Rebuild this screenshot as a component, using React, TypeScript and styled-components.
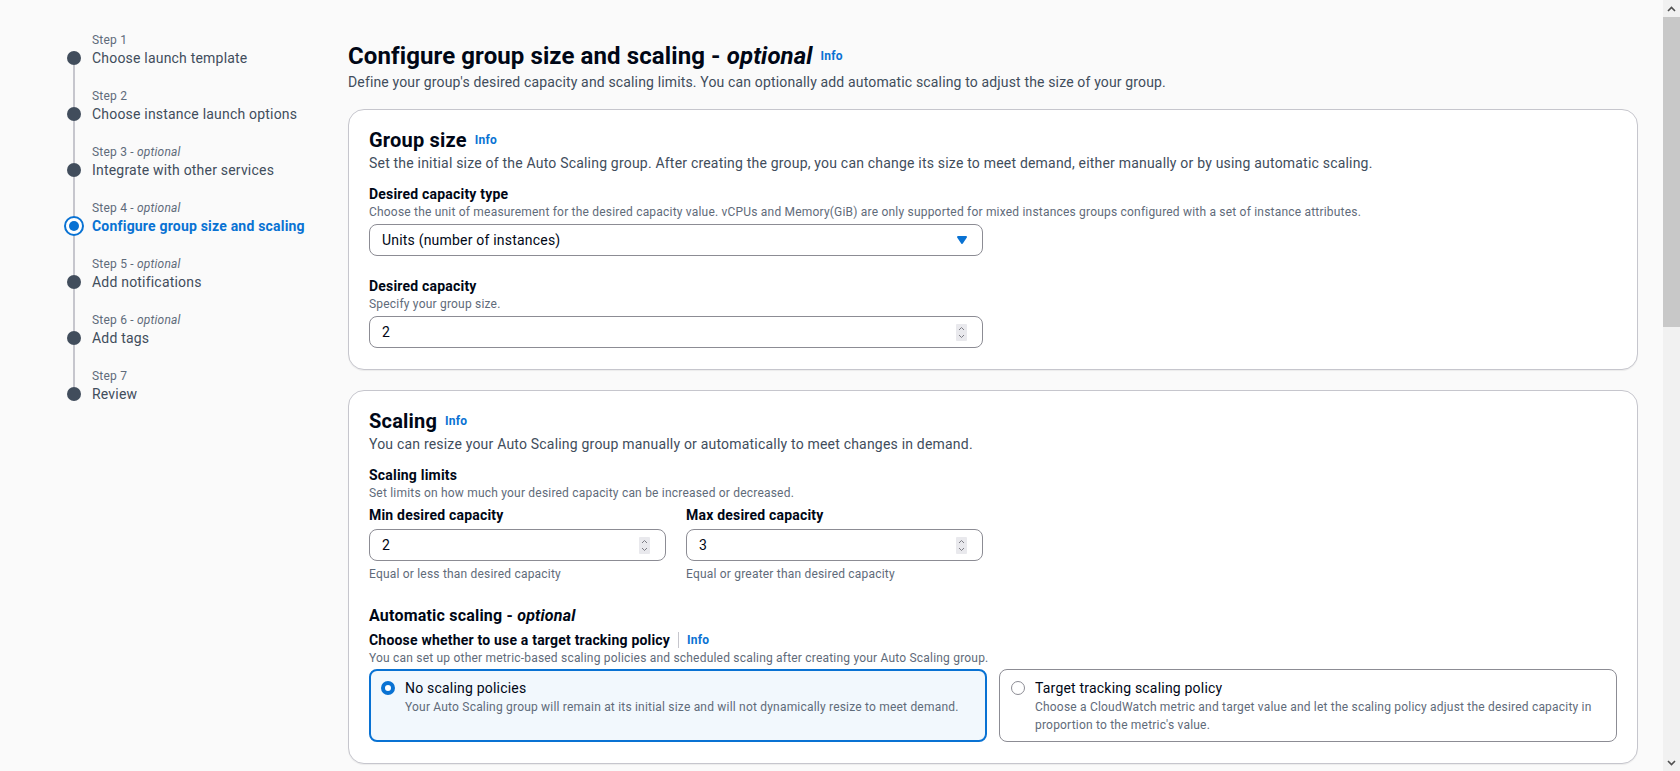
import styled, { createGlobalStyle } from 'styled-components';

const GlobalStyle = createGlobalStyle`
  * { box-sizing: border-box; }
  html, body {
    margin: 0;
    padding: 0;
    background: #fafafa;
  }
  body {
    font-family: Roboto, "Liberation Sans", Arial, sans-serif;
    font-size: 14px;
    line-height: 20px;
    letter-spacing: 0.2px;
    color: #000716;
  }
`;

const Page = styled.div`
  display: flex;
  align-items: flex-start;
  padding-bottom: 60px;
`;

const Nav = styled.nav`
  flex: none;
  width: 348px;
  padding: 32px 0 0 56px;
`;

const StepItem = styled.div`
  display: grid;
  grid-template-columns: 36px auto;
  grid-template-rows: 16px 20px 20px;
`;

const Rail = styled.div`
  grid-row: 1 / span 3;
  display: flex;
  flex-direction: column;
  align-items: center;
`;

const Segment = styled.div<{ $hidden?: boolean; $size?: number; $grow?: boolean }>`
  width: 2px;
  flex: ${(p) => (p.$grow ? '1' : 'none')};
  height: ${(p) => (p.$size ? `${p.$size}px` : 'auto')};
  background: ${(p) => (p.$hidden ? 'transparent' : '#c6c6cd')};
`;

const Dot = styled.div<{ $active?: boolean }>`
  flex: none;
  width: ${(p) => (p.$active ? '20px' : '14px')};
  height: ${(p) => (p.$active ? '20px' : '14px')};
  border-radius: 50%;
  background: ${(p) => (p.$active ? '#ffffff' : '#414d5c')};
  border: ${(p) => (p.$active ? '2px solid #0972d3' : 'none')};
  display: flex;
  align-items: center;
  justify-content: center;
`;

const DotCore = styled.div`
  width: 10px;
  height: 10px;
  border-radius: 50%;
  background: #0972d3;
`;

const StepNumber = styled.div`
  font-size: 12px;
  line-height: 16px;
  color: #5f6b7a;
  white-space: nowrap;
`;

const StepLabel = styled.div<{ $active?: boolean }>`
  font-size: 14px;
  line-height: 20px;
  white-space: nowrap;
  color: ${(p) => (p.$active ? '#0972d3' : '#414d5c')};
  font-weight: ${(p) => (p.$active ? 700 : 400)};
`;

const Main = styled.main`
  flex: none;
  width: 1290px;
  padding-top: 41px;
`;

const TitleRow = styled.div`
  display: flex;
  align-items: center;
  gap: 8px;
`;

const H1 = styled.h1`
  margin: 0;
  font-size: 24px;
  line-height: 30px;
  font-weight: 700;
  letter-spacing: 0.1px;
  color: #000716;
`;

const InfoLink = styled.a`
  font-size: 12px;
  line-height: 16px;
  font-weight: 700;
  color: #0972d3;
  text-decoration: none;
`;

const PageDesc = styled.p`
  margin: 1px 0 17px;
  font-size: 14px;
  line-height: 20px;
  letter-spacing: 0.15px;
  color: #414d5c;
`;

const Container = styled.section`
  background: #ffffff;
  border: 1px solid #c6c6cd;
  border-radius: 16px;
  padding: 18px 20px 21px;
  box-shadow: 0 1px 1px rgba(0, 7, 22, 0.06);
  & + & {
    margin-top: 20px;
  }
`;

const H2 = styled.h2`
  margin: 0;
  font-size: 20px;
  line-height: 24px;
  font-weight: 700;
`;

const CardDesc = styled.p`
  margin: 1px 0 11px;
  font-size: 14px;
  line-height: 20px;
  color: #414d5c;
`;

const Field = styled.div<{ $gap?: number }>`
  display: flex;
  flex-direction: column;
  width: 614px;
  margin-top: ${(p) => p.$gap ?? 0}px;
`;

const Label = styled.div`
  display: flex;
  align-items: center;
  font-size: 14px;
  line-height: 20px;
  font-weight: 700;
  white-space: nowrap;
`;

const Desc = styled.div`
  font-size: 12px;
  line-height: 16px;
  color: #5f6b7a;
  white-space: nowrap;
`;

const Control = styled.div<{ $gap?: number }>`
  margin-top: ${(p) => p.$gap ?? 4}px;
`;

const SelectBox = styled.div`
  display: flex;
  align-items: center;
  justify-content: space-between;
  height: 32px;
  padding: 0 12px 0 12px;
  border: 1px solid #8c8c94;
  border-radius: 8px;
  background: #ffffff;
  font-size: 14px;
`;

const InputBox = styled.div`
  display: flex;
  align-items: center;
  height: 32px;
  padding: 0 15px 0 12px;
  border: 1px solid #8c8c94;
  border-radius: 8px;
  background: #ffffff;
`;

const ValueInput = styled.input`
  flex: 1;
  min-width: 0;
  border: none;
  outline: none;
  padding: 0;
  background: transparent;
  font: inherit;
  font-size: 14px;
  letter-spacing: 0.2px;
  color: #000716;
`;

const LimitsGrid = styled.div`
  display: grid;
  grid-template-columns: 1fr 1fr;
  gap: 20px;
  width: 614px;
  margin-top: 4px;
`;

const Constraint = styled.div`
  margin-top: 5px;
  font-size: 12px;
  line-height: 16px;
  color: #5f6b7a;
`;

const H3 = styled.h3`
  margin: 24px 0 0;
  font-size: 16px;
  line-height: 20px;
  font-weight: 700;
`;

const Divider = styled.span`
  display: inline-block;
  width: 1px;
  height: 16px;
  margin: 0 8px;
  background: #c6c6cd;
`;

const TilesGrid = styled.div`
  display: grid;
  grid-template-columns: 1fr 1fr;
  gap: 12px;
  margin-top: 3px;
`;

const Tile = styled.label<{ $selected?: boolean }>`
  display: flex;
  align-items: flex-start;
  gap: 10px;
  border-radius: 8px;
  border: ${(p) => (p.$selected ? '2px solid #0972d3' : '1px solid #8c8c94')};
  background: ${(p) => (p.$selected ? '#f2f8fd' : '#ffffff')};
  padding: ${(p) => (p.$selected ? '7px 10px 6px 10px' : '8px 11px 7px 11px')};
`;

const Radio = styled.span<{ $checked?: boolean }>`
  flex: none;
  margin-top: 3px;
  width: 14px;
  height: 14px;
  border-radius: 50%;
  background: #ffffff;
  border: ${(p) => (p.$checked ? '4px solid #0972d3' : '1.5px solid #8c8c94')};
`;

const TileText = styled.div`
  display: flex;
  flex-direction: column;
`;

const TileTitle = styled.div`
  font-size: 14px;
  line-height: 20px;
  color: #000716;
`;

const TileDesc = styled.div`
  font-size: 12px;
  line-height: 18px;
  color: #5f6b7a;
`;

const Footer = styled.div`
  display: flex;
  justify-content: flex-end;
  gap: 16px;
  margin-top: 24px;
`;

const Button = styled.button<{ $primary?: boolean }>`
  height: 32px;
  padding: 0 20px;
  border-radius: 20px;
  font: inherit;
  font-weight: 700;
  font-size: 14px;
  border: 2px solid ${(p) => (p.$primary ? '#ff9900' : 'transparent')};
  background: ${(p) => (p.$primary ? '#ff9900' : 'transparent')};
  color: ${(p) => (p.$primary ? '#000716' : '#0972d3')};
`;

// window scrollbar, drawn since the headless browser hides the native one
const ScrollTrack = styled.div`
  position: fixed;
  top: 0;
  right: 0;
  width: 17px;
  height: 100vh;
  background: #f1f1f1;
  display: flex;
  flex-direction: column;
`;

const ScrollArrow = styled.div`
  flex: none;
  height: 17px;
  display: flex;
  align-items: center;
  justify-content: center;
`;

const ScrollThumb = styled.div`
  flex: none;
  height: 310px;
  background: #c8c8c8;
`;

const ScrollRest = styled.div`
  flex: 1;
`;

const Caret = () => (
  <svg width="16" height="16" viewBox="0 0 16 16">
    <path
      d="M4 5h8l-4 6-4-6z"
      fill="#0972d3"
      stroke="#0972d3"
      strokeWidth="2"
      strokeLinejoin="round"
    />
  </svg>
);

const Spinner = () => (
  <svg width="11" height="17" viewBox="0 0 11 17">
    <rect x="0" y="0" width="11" height="17" rx="1" fill="#e9e9ed" />
    <path d="M3 6 L5.5 3.5 L8 6" fill="none" stroke="#7d7d85" strokeWidth="1" />
    <path d="M3 11 L5.5 13.5 L8 11" fill="none" stroke="#7d7d85" strokeWidth="1" />
  </svg>
);

const Chevron = ({ up }: { up?: boolean }) => (
  <svg width="9" height="6" viewBox="0 0 9 6">
    <path
      d={up ? 'M1 5 L4.5 1.5 L8 5' : 'M1 1 L4.5 4.5 L8 1'}
      fill="none"
      stroke="#505050"
      strokeWidth="1.6"
    />
  </svg>
);

const Optional = () => <i>optional</i>;

interface StepProps {
  num: number;
  optional?: boolean;
  label: string;
  active?: boolean;
  first?: boolean;
  last?: boolean;
}

const Step = ({ num, optional, label, active, first, last }: StepProps) => {
  const dot = active ? 20 : 14;
  return (
    <StepItem>
      <Rail>
        <Segment $hidden={first} $size={16 + (20 - dot) / 2} />
        <Dot $active={active}>{active && <DotCore />}</Dot>
        <Segment $hidden={last} $grow />
      </Rail>
      <StepNumber>
        Step {num}
        {optional && (
          <>
            {' - '}
            <Optional />
          </>
        )}
      </StepNumber>
      <StepLabel $active={active}>{label}</StepLabel>
    </StepItem>
  );
};

const steps = [
  { label: 'Choose launch template' },
  { label: 'Choose instance launch options' },
  { label: 'Integrate with other services', optional: true },
  { label: 'Configure group size and scaling', optional: true, active: true },
  { label: 'Add notifications', optional: true },
  { label: 'Add tags', optional: true },
  { label: 'Review' },
];

const NumberInput = ({ value }: { value: string }) => (
  <InputBox>
    <ValueInput type="text" defaultValue={value} />
    <Spinner />
  </InputBox>
);

const App = () => {
  return (
    <>
      <GlobalStyle />
      <Page>
        <Nav>
          {steps.map((s, i) => (
            <Step
              key={s.label}
              num={i + 1}
              label={s.label}
              optional={s.optional}
              active={s.active}
              first={i === 0}
              last={i === steps.length - 1}
            />
          ))}
        </Nav>

        <Main>
          <TitleRow>
            <H1>
              Configure group size and scaling - <Optional />
            </H1>
            <InfoLink>Info</InfoLink>
          </TitleRow>
          <PageDesc>
            Define your group's desired capacity and scaling limits. You can optionally add automatic
            scaling to adjust the size of your group.
          </PageDesc>

          <Container>
            <TitleRow>
              <H2>Group size</H2>
              <InfoLink>Info</InfoLink>
            </TitleRow>
            <CardDesc>
              Set the initial size of the Auto Scaling group. After creating the group, you can change its
              size to meet demand, either manually or by using automatic scaling.
            </CardDesc>
            <Field>
              <Label>Desired capacity type</Label>
              <Desc>
                Choose the unit of measurement for the desired capacity value. vCPUs and Memory(GiB) are only
                supported for mixed instances groups configured with a set of instance attributes.
              </Desc>
              <Control>
                <SelectBox>
                  <span>Units (number of instances)</span>
                  <Caret />
                </SelectBox>
              </Control>
            </Field>
            <Field $gap={20}>
              <Label>Desired capacity</Label>
              <Desc>Specify your group size.</Desc>
              <Control>
                <NumberInput value="2" />
              </Control>
            </Field>
          </Container>

          <Container>
            <TitleRow>
              <H2>Scaling</H2>
              <InfoLink>Info</InfoLink>
            </TitleRow>
            <CardDesc>
              You can resize your Auto Scaling group manually or automatically to meet changes in demand.
            </CardDesc>
            <Field>
              <Label>Scaling limits</Label>
              <Desc>Set limits on how much your desired capacity can be increased or decreased.</Desc>
            </Field>
            <LimitsGrid>
              <div>
                <Label>Min desired capacity</Label>
                <Control>
                  <NumberInput value="2" />
                </Control>
                <Constraint>Equal or less than desired capacity</Constraint>
              </div>
              <div>
                <Label>Max desired capacity</Label>
                <Control>
                  <NumberInput value="3" />
                </Control>
                <Constraint>Equal or greater than desired capacity</Constraint>
              </div>
            </LimitsGrid>

            <H3>
              Automatic scaling - <Optional />
            </H3>
            <Field $gap={4}>
              <Label>
                Choose whether to use a target tracking policy
                <Divider />
                <InfoLink>Info</InfoLink>
              </Label>
              <Desc>
                You can set up other metric-based scaling policies and scheduled scaling after creating your
                Auto Scaling group.
              </Desc>
            </Field>
            <TilesGrid>
              <Tile $selected>
                <Radio $checked />
                <TileText>
                  <TileTitle>No scaling policies</TileTitle>
                  <TileDesc>
                    Your Auto Scaling group will remain at its initial size and will not dynamically resize to
                    meet demand.
                  </TileDesc>
                </TileText>
              </Tile>
              <Tile>
                <Radio />
                <TileText>
                  <TileTitle>Target tracking scaling policy</TileTitle>
                  <TileDesc>
                    Choose a CloudWatch metric and target value and let the scaling policy adjust the desired
                    capacity in proportion to the metric's value.
                  </TileDesc>
                </TileText>
              </Tile>
            </TilesGrid>
          </Container>

          <Container>
            <TitleRow>
              <H2>Instance maintenance policy</H2>
              <InfoLink>Info</InfoLink>
            </TitleRow>
            <CardDesc>
              Control your Auto Scaling group's availability during instance replacement events.
            </CardDesc>
            <Field>
              <Label>Choose a replacement behavior depending on your availability requirements</Label>
              <Control>
                <SelectBox>
                  <span>No policy</span>
                  <Caret />
                </SelectBox>
              </Control>
            </Field>
          </Container>

          <Container>
            <TitleRow>
              <H2>Additional settings</H2>
            </TitleRow>
            <CardDesc>Instance scale-in protection and default instance warmup.</CardDesc>
            <Field>
              <Label>Instance scale-in protection</Label>
              <Desc>If protect from scale in is enabled, newly launched instances will be protected.</Desc>
            </Field>
            <Field $gap={20}>
              <Label>Default instance warmup</Label>
              <Desc>The amount of time that CloudWatch metrics for new instances do not contribute.</Desc>
            </Field>
          </Container>

          <Footer>
            <Button>Cancel</Button>
            <Button>Skip to review</Button>
            <Button>Previous</Button>
            <Button $primary>Next</Button>
          </Footer>
        </Main>
      </Page>

      <ScrollTrack>
        <ScrollArrow>
          <Chevron up />
        </ScrollArrow>
        <ScrollThumb />
        <ScrollRest />
        <ScrollArrow>
          <Chevron />
        </ScrollArrow>
      </ScrollTrack>
    </>
  );
};

export default App;
